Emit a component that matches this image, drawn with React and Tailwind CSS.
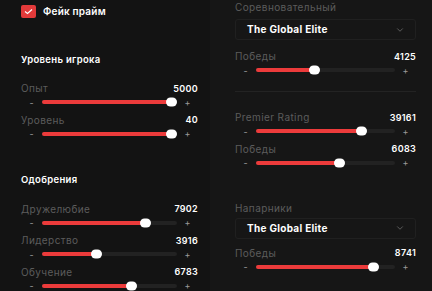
import { ChevronDown } from "lucide-react";

const Slider = ({ label, value, max }) => {
    const pct = Math.min(value / max, 1);
    return (
        <div className="flex flex-col">
            <div className="flex items-center justify-between h-[13px]">
                <span className="text-[10px] tracking-[0.4px] text-[#5c5c5c]">{label}</span>
                <span className="text-[9px] font-semibold tracking-[0.3px] text-white">{value}</span>
            </div>
            <div className="flex items-center h-[14px]">
                <span className="w-[21px] text-center text-[9px] text-[#9a9a9a] leading-none">-</span>
                <div className="relative flex-1 h-[4px] bg-[#222222] rounded-full">
                    <div className="absolute left-0 top-0 h-full bg-[#ec3b3b] rounded-full" style={{ width: `calc(${pct} * (100% - 11px) + 5px)` }} />
                    <div className="absolute top-1/2 -translate-y-1/2 w-[11px] h-[9px] rounded-full bg-white" style={{ left: `calc(${pct} * (100% - 11px))` }} />
                </div>
                <span className="w-[21px] text-center text-[9px] text-[#9a9a9a] leading-none">+</span>
            </div>
        </div>
    );
};

const Select = () => (
    <div className="flex items-center justify-between h-[21px] border border-[#202020] rounded-[3px] pl-[11px] pr-[10px]">
        <span className="text-[10px] font-bold tracking-[0.3px] text-white">The Global Elite</span>
        <ChevronDown size={10} className="text-[#6a6a6a]" />
    </div>
);

export default function App() {
    return (
        <div className="w-[432px] h-[291px] overflow-hidden bg-[#131313] flex" style={{ fontFamily: "Inter, 'Noto Sans', sans-serif" }}>
            {/* Left column */}
            <div className="w-[210px] pl-[21px] pr-[12px] flex flex-col shrink-0">
                <div className="flex items-center gap-[7px] mt-[4px] h-[14px]">
                    <div className="w-[15px] h-[13px] bg-[#e33a3a] rounded-[2px] flex items-center justify-center">
                        <svg width="9" height="7" viewBox="0 0 9 7" fill="none">
                            <path d="M1 3.5L3.5 5.5L8 1.5" stroke="white" strokeWidth="1.2" />
                        </svg>
                    </div>
                    <span className="text-[10px] font-semibold tracking-[0.2px] text-white">Фейк прайм</span>
                </div>
                <div className="h-px bg-[#232323] mt-[15px] ml-[1px]" />

                <div className="h-[12px] flex items-center text-[9.5px] font-semibold tracking-[0.3px] text-white mt-[21px]">Уровень игрока</div>
                <div className="flex flex-col gap-[4.5px] mt-[16px]">
                    <Slider label="Опыт" value={5000} max={5000} />
                    <Slider label="Уровень" value={40} max={40} />
                </div>
                <div className="h-px bg-[#232323] mt-[13px] ml-[1px]" />

                <div className="h-[12px] flex items-center text-[9.5px] font-semibold tracking-[0.3px] text-white mt-[21px]">Одобрения</div>
                <div className="flex flex-col gap-[4.5px] mt-[16px]">
                    <Slider label="Дружелюбие" value={7902} max={10000} />
                    <Slider label="Лидерство" value={3916} max={10000} />
                    <Slider label="Обучение" value={6783} max={10000} />
                </div>
            </div>

            {/* Right column */}
            <div className="flex-1 bg-[#161616] pl-[25px] pr-[16px] flex flex-col">
                <div className="text-[10px] tracking-[0.4px] text-[#5c5c5c] mt-[1px] h-[13px] flex items-center">Соревновательный</div>
                <div className="mt-[5px]"><Select /></div>
                <div className="mt-[10px]">
                    <Slider label="Победы" value={4125} max={10000} />
                </div>
                <div className="h-px bg-[#232323] mt-[14px]" />

                <div className="flex flex-col gap-[4.5px] mt-[19px]">
                    <Slider label="Premier Rating" value={39161} max={50000} />
                    <Slider label="Победы" value={6083} max={10000} />
                </div>

                <div className="text-[10px] tracking-[0.4px] text-[#5c5c5c] mt-[32px] h-[13px] flex items-center">Напарники</div>
                <div className="mt-[3px]"><Select /></div>
                <div className="mt-[8px]">
                    <Slider label="Победы" value={8741} max={10000} />
                </div>
            </div>
        </div>
    );
}
